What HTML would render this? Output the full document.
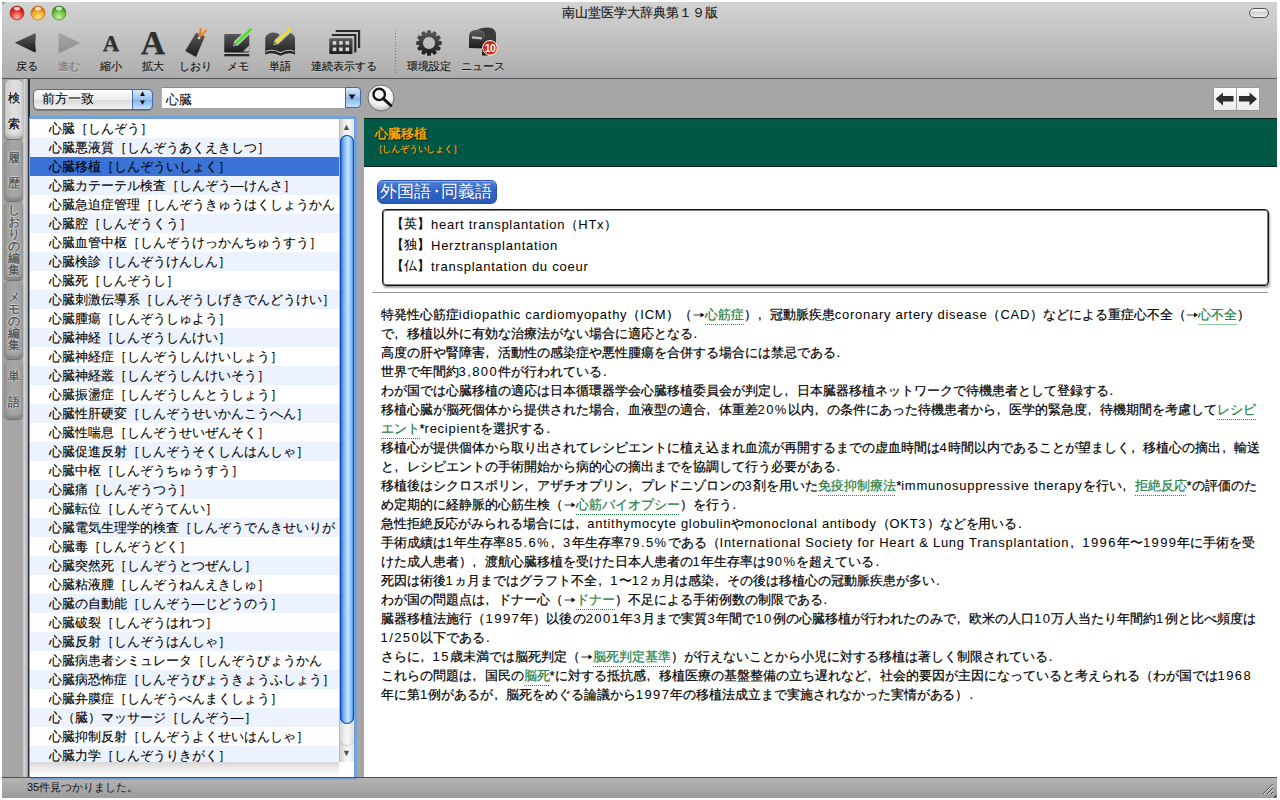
<!DOCTYPE html>
<html><head><meta charset="utf-8"><style>
*{box-sizing:border-box}
html,body{margin:0;padding:0;width:1280px;height:800px;overflow:hidden;background:#fff;font-family:"Liberation Sans",sans-serif;color:#000}
.a{position:absolute}
svg{position:absolute;overflow:visible}
#win{position:absolute;left:2px;top:2px;width:1275px;height:795.5px;background:#a6a6a6;overflow:hidden}
#tb{position:absolute;left:0;top:0;width:1275px;height:76px;background:linear-gradient(#d3d3d3,#cacaca 25%,#adadad)}
#tbline{position:absolute;left:0;top:76px;width:1275px;height:1px;background:#575757}
#title{position:absolute;left:0;top:3.2px;-webkit-text-stroke:0.15px #111;width:1275px;text-align:center;font-size:13px;line-height:15px;color:#1a1a1a}
.tl{position:absolute;top:4px;width:14px;height:14px;border-radius:50%}
.lbl{position:absolute;top:58px;-webkit-text-stroke:0.15px currentColor;font-size:11px;line-height:13px;color:#0e0e0e;text-shadow:0 1px 0 rgba(255,255,255,.35);text-align:center;white-space:nowrap}
#strip{position:absolute;left:0;top:77px;width:28px;height:698px;background:#a6a6a6}
#list{position:absolute;left:28px;top:114px;width:327px;height:661px;background:#fff}
.row{position:absolute;left:2px;width:309px;height:19px;font-size:13px;line-height:19.5px;-webkit-text-stroke:0.1px #000;padding-left:16px;white-space:nowrap;overflow:hidden;color:#000}
.odd{background:#edf3fe}
.sel{background:#3a72d6}
#content{position:absolute;left:362px;top:115px;width:913px;height:660px;background:linear-gradient(#a6a6a6 0 1px,#fff 1px);overflow:hidden}
#hdr{position:absolute;left:0;top:1px;width:913px;height:48.5px;background:#005846;border-top:1px solid #08261c;border-bottom:1px solid #08261c}
.ln{position:absolute;font-size:13px;line-height:19px;white-space:nowrap;transform-origin:0 50%;color:#000;-webkit-text-stroke:0.2px #000}
.lk{color:#22803f;-webkit-text-stroke-color:#22803f;background-image:linear-gradient(90deg,#2a8a4a 50%,transparent 50%);background-size:2px 1px;background-repeat:repeat-x;background-position:0 100%;padding-bottom:3px}
.pc{display:inline-block;width:13px;padding-left:1px;font-size:13px;letter-spacing:0}
.ar{position:static;display:inline-block;vertical-align:-2px}
#status{position:absolute;left:0;top:775px;width:1275px;height:21px;background:linear-gradient(#b4b4b4,#9c9c9c);border-top:1px solid #4e4e4e}
.en{letter-spacing:.75px;-webkit-text-stroke-width:0}
.dg{letter-spacing:1.4px;-webkit-text-stroke-width:0}
.bk{display:inline-block;overflow:hidden;vertical-align:top;height:19px}
.vt{position:absolute;font-size:12px;line-height:13px;width:14px;text-align:center;-webkit-text-stroke:0.3px currentColor}
</style></head><body><div id="win">
<div id="tb"></div><div id="tbline"></div>
<div id="title">南山堂医学大辞典第１９版</div>
<svg style="left:7px;top:3px" width="16" height="16" viewBox="0 0 16 16"><defs><radialGradient id="tl0" cx="50%" cy="80%" r="75%"><stop offset="0" stop-color="#ffb8b4"/><stop offset="0.6" stop-color="#e8342c"/><stop offset="1" stop-color="#9a1410"/></radialGradient></defs><circle cx="8" cy="8" r="7" fill="url(#tl0)" stroke="#9a1410" stroke-opacity=".7" stroke-width=".8"/><ellipse cx="8" cy="3.6" rx="3.2" ry="1.8" fill="#fff" fill-opacity=".75"/></svg>
<svg style="left:28px;top:3px" width="16" height="16" viewBox="0 0 16 16"><defs><radialGradient id="tl1" cx="50%" cy="80%" r="75%"><stop offset="0" stop-color="#ffe58a"/><stop offset="0.6" stop-color="#f2a528"/><stop offset="1" stop-color="#b85a08"/></radialGradient></defs><circle cx="8" cy="8" r="7" fill="url(#tl1)" stroke="#b85a08" stroke-opacity=".7" stroke-width=".8"/><ellipse cx="8" cy="3.6" rx="3.2" ry="1.8" fill="#fff" fill-opacity=".75"/></svg>
<svg style="left:49px;top:3px" width="16" height="16" viewBox="0 0 16 16"><defs><radialGradient id="tl2" cx="50%" cy="80%" r="75%"><stop offset="0" stop-color="#cdf2a0"/><stop offset="0.6" stop-color="#6cc040"/><stop offset="1" stop-color="#2e7a14"/></radialGradient></defs><circle cx="8" cy="8" r="7" fill="url(#tl2)" stroke="#2e7a14" stroke-opacity=".7" stroke-width=".8"/><ellipse cx="8" cy="3.6" rx="3.2" ry="1.8" fill="#fff" fill-opacity=".75"/></svg>
<div class="a" style="left:1247px;top:6px;width:20px;height:10px;border-radius:5px;border:1.5px solid #555;background:linear-gradient(#fafafa,#cfcfcf 50%,#f2f2f2)"></div>
<svg style="left:0;top:0" width="4" height="4"><path d="M0 2.5 L2.5 0" stroke="#444" stroke-width="1"/></svg>
<div class="lbl" style="left:-25.5px;width:100px;color:#0e0e0e">戻る</div>
<div class="lbl" style="left:16.5px;width:100px;color:#7a7a7a">進む</div>
<div class="lbl" style="left:59px;width:100px;color:#0e0e0e">縮小</div>
<div class="lbl" style="left:101px;width:100px;color:#0e0e0e">拡大</div>
<div class="lbl" style="left:143.5px;width:100px;color:#0e0e0e">しおり</div>
<div class="lbl" style="left:186px;width:100px;color:#0e0e0e">メモ</div>
<div class="lbl" style="left:228px;width:100px;color:#0e0e0e">単語</div>
<div class="lbl" style="left:291.5px;width:100px;color:#0e0e0e">連続表示する</div>
<div class="lbl" style="left:376.5px;width:100px;color:#0e0e0e">環境設定</div>
<div class="lbl" style="left:431px;width:100px;color:#0e0e0e">ニュース</div>
<svg style="left:0;top:0" width="1" height="1"><defs>
<linearGradient id="dk" x1="0" y1="0" x2="0" y2="1"><stop offset="0" stop-color="#5a5a5a"/><stop offset="1" stop-color="#1c1c1c"/></linearGradient>
<linearGradient id="lt" x1="0" y1="0" x2="0" y2="1"><stop offset="0" stop-color="#a8a8a8"/><stop offset="1" stop-color="#8c8c8c"/></linearGradient>
</defs></svg>
<svg style="left:11px;top:28.5px" width="25" height="24" viewBox="0 0 25 24"><path d="M1.8 11.8 L21.5 2.6 Q22.8 2 22.8 3.5 Q21.8 12 22.8 20 Q22.8 21.8 21.5 21.2 Z" fill="url(#dk)"/></svg>
<svg style="left:55px;top:29px" width="25" height="24" viewBox="0 0 25 24"><path d="M23.5 12 L2.5 2 Q1.5 1.8 1.5 3 L1.5 21 Q1.5 22.2 2.5 22 Z" fill="url(#lt)"/></svg>
<div class="a" style="left:99px;top:29.5px;width:20px;text-align:center;font-family:'Liberation Serif',serif;font-weight:bold;font-size:23px;line-height:23px;color:#2e2e2e;text-shadow:0 1px 1px rgba(0,0,0,.35)">A</div>
<div class="a" style="left:137px;top:24px;width:28px;text-align:center;font-family:'Liberation Serif',serif;font-weight:bold;font-size:34px;line-height:34px;color:#2e2e2e;text-shadow:0 1px 1px rgba(0,0,0,.35)">A</div>
<svg style="left:181px;top:24px" width="27" height="33" viewBox="0 0 27 33"><path d="M13.1 6.75 L21.9 10.2 L13.1 31.1 L2.2 24.9 Z" fill="url(#dk)"/><path d="M2.6 25.6 L12.8 31.4" stroke="#9a9a9a" stroke-width="1" stroke-dasharray="1.5 1"/><circle cx="16" cy="12" r="1.3" fill="#d8d8d8"/><path d="M15.5 11 L16.8 2 L19 2.3 L18.4 8.2 L22.6 3.2 L24.3 4.6 L17.5 11.5 Z" fill="#f57d12"/></svg>
<svg style="left:220px;top:24px" width="32" height="32" viewBox="0 0 32 32"><rect x="2.25" y="8" width="25" height="18.4" rx="1" fill="url(#dk)"/><rect x="2.25" y="28" width="25" height="2.3" fill="#2a2a2a"/><path d="M21 25.5 L27 19.5 L27.3 25.5 Z" fill="#b8b8b8"/><path d="M12 19.5 L13.1 15.6 L27.1 2.1 Q28.5 0.8 29.9 2.1 Q31.2 3.5 29.9 4.9 L15.9 18.5 Z" fill="#3ee61c" stroke="#c4c4c4" stroke-width="1.6" stroke-linejoin="round"/><path d="M12 19.5 L12.6 17.3 L14.2 18.9 Z" fill="#444"/></svg>
<svg style="left:260px;top:25px" width="36" height="32" viewBox="0 0 36 32"><path d="M3.3 10.5 Q5 6 11 5.6 Q16 5.6 18.5 9 Q21 5.6 26 5.6 Q31.5 6 33 10.5 L33 27.5 Q26 24.5 18.5 28.8 Q11 24.5 3.3 27.5 Z" fill="url(#dk)"/><path d="M3.8 24.6 Q11 21.5 18.5 25.8 Q26 21.5 32.5 24.6" stroke="#c0c0c0" stroke-width="1.1" fill="none"/><path d="M12.3 17.2 L13.48 13.35 L26.83 0.75 Q28.2 -0.5 29.57 0.75 Q30.9 2.2 29.57 3.65 L16.22 16.25 Z" fill="#f4e800" stroke="#c4c4c4" stroke-width="1.6" stroke-linejoin="round"/><path d="M12.3 17.2 L12.9 15 L14.5 16.6 Z" fill="#444"/></svg>
<svg style="left:324px;top:25px" width="38" height="30" viewBox="0 0 38 30"><path d="M9.7 3 H34.2 V21 H32 V5 H9.7 Z" fill="#2a2a2a"/><path d="M5.9 6.9 H30.4 V25.4 H28.2 V9 H5.9 Z" fill="#2a2a2a"/><rect x="3.3" y="11.2" width="23.2" height="15.8" rx="0.8" fill="url(#dk)"/><rect x="6.7" y="14.1" width="3.6" height="3.6" fill="#d4d4d4"/><rect x="6.7" y="20.5" width="3.6" height="3.6" fill="#d4d4d4"/><rect x="13.1" y="14.1" width="3.6" height="3.6" fill="#d4d4d4"/><rect x="13.1" y="20.5" width="3.6" height="3.6" fill="#d4d4d4"/><rect x="19.5" y="14.1" width="3.6" height="3.6" fill="#d4d4d4"/><rect x="19.5" y="20.5" width="3.6" height="3.6" fill="#d4d4d4"/></svg>
<div class="a" style="left:393px;top:28px;width:1px;height:44px;background-image:linear-gradient(#777 50%,transparent 50%);background-size:1px 3px"></div>
<svg style="left:413.1px;top:27.1px" width="28" height="28" viewBox="0 0 28 28"><path d="M12.33,1.21 L15.67,1.21 L16.23,4.05 L17.05,4.27 L18.95,2.09 L21.84,3.76 L20.90,6.49 L21.51,7.10 L24.24,6.16 L25.91,9.05 L23.73,10.95 L23.95,11.77 L26.79,12.33 L26.79,15.67 L23.95,16.23 L23.73,17.05 L25.91,18.95 L24.24,21.84 L21.51,20.90 L20.90,21.51 L21.84,24.24 L18.95,25.91 L17.05,23.73 L16.23,23.95 L15.67,26.79 L12.33,26.79 L11.77,23.95 L10.95,23.73 L9.05,25.91 L6.16,24.24 L7.10,21.51 L6.49,20.90 L3.76,21.84 L2.09,18.95 L4.27,17.05 L4.05,16.23 L1.21,15.67 L1.21,12.33 L4.05,11.77 L4.27,10.95 L2.09,9.05 L3.76,6.16 L6.49,7.10 L7.10,6.49 L6.16,3.76 L9.05,2.09 L10.95,4.27 L11.77,4.05 Z M14 8 A6 6 0 1 0 14.01 8 Z" fill="url(#dk)" fill-rule="evenodd"/></svg>
<svg style="left:464px;top:23px" width="34" height="34" viewBox="0 0 34 34"><path d="M16 23.6 L16 30.4 L22 30.4 L22 23 Z" fill="#1e1e1e"/><path d="M10 5.5 Q14 2.5 22 2.5 Q30 2.5 30 10 L30 21 L19 24 Z" fill="#3a3a3a"/><path d="M3 23 L3 12 Q3 5 10 5 Q19 5 19 12 L19 23.6 Z" fill="url(#dk)"/><path d="M18.5 12 Q18.5 6 12 5.2" stroke="#777" stroke-width=".8" fill="none"/><path d="M6 11.2 L16 12.2 L16 14.5 L6 13.5 Z" fill="#c4c4c4"/><circle cx="24" cy="22.8" r="7.3" fill="#d42414" stroke="#f4f4f4" stroke-width="1"/><text x="24" y="26.6" font-family="Liberation Sans" font-weight="bold" font-size="10.5" fill="#fff" text-anchor="middle" letter-spacing="-0.5">10</text></svg>
<div class="a" style="left:31px;top:87px;width:120px;height:21px;border-radius:5px;border:1px solid #6a6a6a;background:linear-gradient(#ffffff,#ececec 50%,#d8d8d8 51%,#f4f4f4);box-shadow:0 1px 1px rgba(0,0,0,.25)"></div>
<div class="a" style="left:130px;top:87px;width:21px;height:21px;border-radius:0 5px 5px 0;border:1px solid #4668a8;background:linear-gradient(#dbe9fb,#9cc2f0 50%,#7eb0ec 51%,#c4e2fd)"></div>
<div class="a" style="left:134px;top:88px;width:13px;font-size:8px;line-height:8.5px;text-align:center;color:#111">▲<br>▼</div>
<div class="a" style="left:39.5px;top:87.5px;font-size:13px;line-height:17px">前方一致</div>
<div class="a" style="left:159px;top:85px;width:184px;height:20.5px;background:#fff;border-top:1px solid #8a8a8a;border-left:1px solid #b0b0b0"></div>
<div class="a" style="left:163.5px;top:88.5px;font-size:13px;line-height:17px">心臓</div>
<div class="a" style="left:343px;top:85px;width:16px;height:21px;border-radius:0 4px 4px 0;border:1px solid #4668a8;background:linear-gradient(#dbe9fb,#9cc2f0 50%,#7eb0ec 51%,#c4e2fd)"></div>
<svg style="left:346px;top:92px" width="8" height="6" viewBox="0 0 8 6"><path d="M0.5 0.5 H7.5 L4 5.5 Z" fill="#111"/></svg>
<svg style="left:365px;top:82px" width="28" height="28" viewBox="0 0 28 28"><defs><radialGradient id="mg" cx="50%" cy="30%" r="70%"><stop offset="0" stop-color="#fff"/><stop offset="0.7" stop-color="#f0f0f0"/><stop offset="1" stop-color="#b8b8b8"/></radialGradient></defs><circle cx="14" cy="14" r="13" fill="url(#mg)" stroke="#6a6a6a" stroke-width="1"/><circle cx="12.2" cy="10.4" r="5.7" fill="none" stroke="#1a1414" stroke-width="2.4"/><path d="M16.3 14.6 L24 21.6" stroke="#1a1414" stroke-width="2.8" stroke-linecap="round"/></svg>
<div class="a" style="left:1211px;top:85px;width:24px;height:24px;background:linear-gradient(#fdfdfd,#ececec);border:1px solid #9a9a9a"></div>
<div class="a" style="left:1234px;top:85px;width:24px;height:24px;background:linear-gradient(#fdfdfd,#ececec);border:1px solid #9a9a9a"></div>
<svg style="left:1213px;top:89.5px" width="20" height="14" viewBox="0 0 20 14"><path d="M0.5 7 L8 0.5 L8 4 L18.5 4 L18.5 9.5 L8 9.5 L8 13.5 Z" fill="#2e2e2e"/></svg>
<svg style="left:1236px;top:89.5px" width="20" height="14" viewBox="0 0 20 14"><path d="M19 7 L11.5 0.5 L11.5 4 L1 4 L1 9.5 L11.5 9.5 L11.5 13.5 Z" fill="#2e2e2e"/></svg>
<div id="strip"></div>
<div class="a" style="left:20px;top:77px;width:6px;height:698px;background:linear-gradient(90deg,#a0a0a0,#d6d6d6 35%,#c0c0c0 70%,#9a9a9a)"></div>
<div class="a" style="left:26px;top:77px;width:1.5px;height:698px;background:#26303a"></div>
<div class="a" style="left:1.5px;top:78px;width:19px;height:58.5px;border-radius:5px;background:linear-gradient(90deg,#cacaca,#e0e0e0 50%,#d6d6d6);box-shadow:inset 1px 0 0 #8e8e8e,inset 0 -3px 3px rgba(0,0,0,.18),0 1px 1px rgba(0,0,0,.35)"></div>
<div class="vt" style="left:4.5px;top:89.5px;font-size:12px;color:#111;text-shadow:1px 0 1px #fff,-1px 0 1px #fff,0 1px 1px #fff,0 -1px 1px #fff">検</div>
<div class="vt" style="left:4.5px;top:115.5px;font-size:12px;color:#111;text-shadow:1px 0 1px #fff,-1px 0 1px #fff,0 1px 1px #fff,0 -1px 1px #fff">索</div>
<div class="a" style="left:1.5px;top:138px;width:19px;height:61px;border-radius:5px;background:linear-gradient(90deg,#9a9a9a,#a6a6a6 50%,#9e9e9e);box-shadow:inset 1px 0 0 #8e8e8e,inset 0 -3px 3px rgba(0,0,0,.18),0 1px 1px rgba(0,0,0,.35)"></div>
<div class="vt" style="left:4.5px;top:149.5px;font-size:12px;color:#4c4c4c;text-shadow:1px 0 1px #dcdcdc,-1px 0 1px #dcdcdc,0 1px 1px #dcdcdc,0 -1px 1px #dcdcdc">履</div>
<div class="vt" style="left:4.5px;top:175.0px;font-size:12px;color:#4c4c4c;text-shadow:1px 0 1px #dcdcdc,-1px 0 1px #dcdcdc,0 1px 1px #dcdcdc,0 -1px 1px #dcdcdc">歴</div>
<div class="a" style="left:1.5px;top:199.5px;width:19px;height:78.19999999999999px;border-radius:5px;background:linear-gradient(90deg,#9a9a9a,#a6a6a6 50%,#9e9e9e);box-shadow:inset 1px 0 0 #8e8e8e,inset 0 -3px 3px rgba(0,0,0,.18),0 1px 1px rgba(0,0,0,.35)"></div>
<div class="vt" style="left:4.5px;top:201.5px;font-size:11.5px;color:#4c4c4c;text-shadow:1px 0 1px #dcdcdc,-1px 0 1px #dcdcdc,0 1px 1px #dcdcdc,0 -1px 1px #dcdcdc">し</div>
<div class="vt" style="left:4.5px;top:213.5px;font-size:11.5px;color:#4c4c4c;text-shadow:1px 0 1px #dcdcdc,-1px 0 1px #dcdcdc,0 1px 1px #dcdcdc,0 -1px 1px #dcdcdc">お</div>
<div class="vt" style="left:4.5px;top:225.5px;font-size:11.5px;color:#4c4c4c;text-shadow:1px 0 1px #dcdcdc,-1px 0 1px #dcdcdc,0 1px 1px #dcdcdc,0 -1px 1px #dcdcdc">り</div>
<div class="vt" style="left:4.5px;top:237.5px;font-size:11.5px;color:#4c4c4c;text-shadow:1px 0 1px #dcdcdc,-1px 0 1px #dcdcdc,0 1px 1px #dcdcdc,0 -1px 1px #dcdcdc">の</div>
<div class="vt" style="left:4.5px;top:249.5px;font-size:11.5px;color:#4c4c4c;text-shadow:1px 0 1px #dcdcdc,-1px 0 1px #dcdcdc,0 1px 1px #dcdcdc,0 -1px 1px #dcdcdc">編</div>
<div class="vt" style="left:4.5px;top:261.5px;font-size:11.5px;color:#4c4c4c;text-shadow:1px 0 1px #dcdcdc,-1px 0 1px #dcdcdc,0 1px 1px #dcdcdc,0 -1px 1px #dcdcdc">集</div>
<div class="a" style="left:1.5px;top:279px;width:19px;height:78px;border-radius:5px;background:linear-gradient(90deg,#9a9a9a,#a6a6a6 50%,#9e9e9e);box-shadow:inset 1px 0 0 #8e8e8e,inset 0 -3px 3px rgba(0,0,0,.18),0 1px 1px rgba(0,0,0,.35)"></div>
<div class="vt" style="left:4.5px;top:288.5px;font-size:11.5px;color:#4c4c4c;text-shadow:1px 0 1px #dcdcdc,-1px 0 1px #dcdcdc,0 1px 1px #dcdcdc,0 -1px 1px #dcdcdc">メ</div>
<div class="vt" style="left:4.5px;top:300.5px;font-size:11.5px;color:#4c4c4c;text-shadow:1px 0 1px #dcdcdc,-1px 0 1px #dcdcdc,0 1px 1px #dcdcdc,0 -1px 1px #dcdcdc">モ</div>
<div class="vt" style="left:4.5px;top:312.5px;font-size:11.5px;color:#4c4c4c;text-shadow:1px 0 1px #dcdcdc,-1px 0 1px #dcdcdc,0 1px 1px #dcdcdc,0 -1px 1px #dcdcdc">の</div>
<div class="vt" style="left:4.5px;top:324.5px;font-size:11.5px;color:#4c4c4c;text-shadow:1px 0 1px #dcdcdc,-1px 0 1px #dcdcdc,0 1px 1px #dcdcdc,0 -1px 1px #dcdcdc">編</div>
<div class="vt" style="left:4.5px;top:336.5px;font-size:11.5px;color:#4c4c4c;text-shadow:1px 0 1px #dcdcdc,-1px 0 1px #dcdcdc,0 1px 1px #dcdcdc,0 -1px 1px #dcdcdc">集</div>
<div class="a" style="left:1.5px;top:358.8px;width:19px;height:58.5px;border-radius:5px;background:linear-gradient(90deg,#9a9a9a,#a6a6a6 50%,#9e9e9e);box-shadow:inset 1px 0 0 #8e8e8e,inset 0 -3px 3px rgba(0,0,0,.18),0 1px 1px rgba(0,0,0,.35)"></div>
<div class="vt" style="left:4.5px;top:368.0px;font-size:12px;color:#4c4c4c;text-shadow:1px 0 1px #dcdcdc,-1px 0 1px #dcdcdc,0 1px 1px #dcdcdc,0 -1px 1px #dcdcdc">単</div>
<div class="vt" style="left:4.5px;top:393.9px;font-size:12px;color:#4c4c4c;text-shadow:1px 0 1px #dcdcdc,-1px 0 1px #dcdcdc,0 1px 1px #dcdcdc,0 -1px 1px #dcdcdc">語</div>
<div class="a" style="left:27px;top:114px;width:328px;height:665px;background:#74a2d8;border-radius:3px"></div>
<div id="list" style="left:28px;top:117px;width:324px;height:658px;background:#fff"></div>
<div class="row" style="left:28px;top:117px;height:19px;width:309.5px;padding-left:18.5px">心臓［しんぞう］</div>
<div class="row odd" style="left:28px;top:136px;height:19px;width:309.5px;padding-left:18.5px">心臓悪液質［しんぞうあくえきしつ］</div>
<div class="row sel" style="left:28px;top:155px;height:19px;width:309.5px;padding-left:18.5px">心臓移植［しんぞういしょく］</div>
<div class="row odd" style="left:28px;top:174px;height:19px;width:309.5px;padding-left:18.5px">心臓カテーテル検査［しんぞう―けんさ］</div>
<div class="row" style="left:28px;top:193px;height:19px;width:309.5px;padding-left:18.5px">心臓急迫症管理［しんぞうきゅうはくしょうかん</div>
<div class="row odd" style="left:28px;top:212px;height:19px;width:309.5px;padding-left:18.5px">心臓腔［しんぞうくう］</div>
<div class="row" style="left:28px;top:231px;height:19px;width:309.5px;padding-left:18.5px">心臓血管中枢［しんぞうけっかんちゅうすう］</div>
<div class="row odd" style="left:28px;top:250px;height:19px;width:309.5px;padding-left:18.5px">心臓検診［しんぞうけんしん］</div>
<div class="row" style="left:28px;top:269px;height:19px;width:309.5px;padding-left:18.5px">心臓死［しんぞうし］</div>
<div class="row odd" style="left:28px;top:288px;height:19px;width:309.5px;padding-left:18.5px">心臓刺激伝導系［しんぞうしげきでんどうけい］</div>
<div class="row" style="left:28px;top:307px;height:19px;width:309.5px;padding-left:18.5px">心臓腫瘍［しんぞうしゅよう］</div>
<div class="row odd" style="left:28px;top:326px;height:19px;width:309.5px;padding-left:18.5px">心臓神経［しんぞうしんけい］</div>
<div class="row" style="left:28px;top:345px;height:19px;width:309.5px;padding-left:18.5px">心臓神経症［しんぞうしんけいしょう］</div>
<div class="row odd" style="left:28px;top:364px;height:19px;width:309.5px;padding-left:18.5px">心臓神経叢［しんぞうしんけいそう］</div>
<div class="row" style="left:28px;top:383px;height:19px;width:309.5px;padding-left:18.5px">心臓振盪症［しんぞうしんとうしょう］</div>
<div class="row odd" style="left:28px;top:402px;height:19px;width:309.5px;padding-left:18.5px">心臓性肝硬変［しんぞうせいかんこうへん］</div>
<div class="row" style="left:28px;top:421px;height:19px;width:309.5px;padding-left:18.5px">心臓性喘息［しんぞうせいぜんそく］</div>
<div class="row odd" style="left:28px;top:440px;height:19px;width:309.5px;padding-left:18.5px">心臓促進反射［しんぞうそくしんはんしゃ］</div>
<div class="row" style="left:28px;top:459px;height:19px;width:309.5px;padding-left:18.5px">心臓中枢［しんぞうちゅうすう］</div>
<div class="row odd" style="left:28px;top:478px;height:19px;width:309.5px;padding-left:18.5px">心臓痛［しんぞうつう］</div>
<div class="row" style="left:28px;top:497px;height:19px;width:309.5px;padding-left:18.5px">心臓転位［しんぞうてんい］</div>
<div class="row odd" style="left:28px;top:516px;height:19px;width:309.5px;padding-left:18.5px">心臓電気生理学的検査［しんぞうでんきせいりが</div>
<div class="row" style="left:28px;top:535px;height:19px;width:309.5px;padding-left:18.5px">心臓毒［しんぞうどく］</div>
<div class="row odd" style="left:28px;top:554px;height:19px;width:309.5px;padding-left:18.5px">心臓突然死［しんぞうとつぜんし］</div>
<div class="row" style="left:28px;top:573px;height:19px;width:309.5px;padding-left:18.5px">心臓粘液腫［しんぞうねんえきしゅ］</div>
<div class="row odd" style="left:28px;top:592px;height:19px;width:309.5px;padding-left:18.5px">心臓の自動能［しんぞう―じどうのう］</div>
<div class="row" style="left:28px;top:611px;height:19px;width:309.5px;padding-left:18.5px">心臓破裂［しんぞうはれつ］</div>
<div class="row odd" style="left:28px;top:630px;height:19px;width:309.5px;padding-left:18.5px">心臓反射［しんぞうはんしゃ］</div>
<div class="row" style="left:28px;top:649px;height:19px;width:309.5px;padding-left:18.5px">心臓病患者シミュレータ［しんぞうびょうかん</div>
<div class="row odd" style="left:28px;top:668px;height:19px;width:309.5px;padding-left:18.5px">心臓病恐怖症［しんぞうびょうきょうふしょう］</div>
<div class="row" style="left:28px;top:687px;height:19px;width:309.5px;padding-left:18.5px">心臓弁膜症［しんぞうべんまくしょう］</div>
<div class="row odd" style="left:28px;top:706px;height:19px;width:309.5px;padding-left:18.5px">心（臓）マッサージ［しんぞう―］</div>
<div class="row" style="left:28px;top:725px;height:19px;width:309.5px;padding-left:18.5px">心臓抑制反射［しんぞうよくせいはんしゃ］</div>
<div class="row odd" style="left:28px;top:744px;height:16px;width:309.5px;padding-left:18.5px">心臓力学［しんぞうりきがく］</div>
<div class="a" style="left:28px;top:760px;width:309px;height:15px;background:linear-gradient(#d6d6d6,#efefef 50%,#fff)"></div>
<div class="a" style="left:337px;top:117px;width:15px;height:643px;background:linear-gradient(90deg,#cfcfcf,#ececec 30%,#fafafa 60%,#e2e2e2);border-left:1px solid #bdbdbd"></div>
<div class="a" style="left:337px;top:120px;width:15px;font-size:9px;line-height:11px;text-align:center;color:#505050">▲</div>
<div class="a" style="left:337px;top:745.5px;width:15px;font-size:9px;line-height:11px;text-align:center;color:#505050">▼</div>
<div class="a" style="left:338px;top:722px;width:14px;height:21px;border-radius:0 0 7px 7px;background:linear-gradient(90deg,#d8d8d8,#f6f6f6 50%,#e0e0e0);box-shadow:0 1px 1px rgba(0,0,0,.2)"></div>
<div class="a" style="left:338px;top:133px;width:13.5px;height:589px;border-radius:7px;background:linear-gradient(90deg,#0f45c0,#5a9ae8 18%,#a0cdf8 40%,#c2e4ff 60%,#78b6f4 85%,#2a62d0);box-shadow:inset 0 0 0 1px #1848b8"></div>
<div class="a" style="left:355px;top:115px;width:7px;height:660px;background:#a6a6a6"></div>
<div id="content">
<div id="hdr"></div>
<div class="a" style="left:11px;top:9px;font-size:13px;line-height:15px;font-weight:bold;color:#f5a000;text-shadow:1px 1px 1px #002a1e">心臓移植</div>
<div class="a" style="left:9.5px;top:26px;font-size:9px;line-height:12px;letter-spacing:-0.2px;color:#f8a400;-webkit-text-stroke:0.25px #f8a400;text-shadow:1px 1px 1px #002a1e;white-space:nowrap">［しんぞういしょく］</div>
<div class="a" style="left:13px;top:63px;width:120px;height:24px;border-radius:6px;background:linear-gradient(#4f82dc,#2f62c4 45%,#2a5cbc);border:1px solid #2a52a8;box-shadow:inset 0 1px 0 #8ab0f0"></div>
<div class="a" style="left:16px;top:65px;font-size:17px;line-height:19px;color:#fff;white-space:nowrap;text-shadow:0 0 1px rgba(0,0,80,.3)">外国語<span style="display:inline-block;width:10px;overflow:hidden;vertical-align:top;height:19px"><span style="position:relative;left:-3.5px">・</span></span>同義語</div>
<div class="a" style="left:18px;top:92px;width:887px;height:77px;border:1px solid #111;border-radius:4px;box-shadow:inset 0 0 0 1px rgba(0,0,0,.5),1px 2px 2px rgba(0,0,0,.35)"></div>
<div class="ln" style="left:27px;top:96.5px;-webkit-text-stroke:0.1px #000">【英】<span style="position:relative;left:1px;top:1.5px"><span class="en">heart transplantation</span>（<span class="en">HTx</span>）</span></div>
<div class="ln" style="left:27px;top:117.5px;-webkit-text-stroke:0.1px #000">【独】<span style="position:relative;left:1px;top:1.5px"><span class="en">Herztransplantation</span></span></div>
<div class="ln" style="left:27px;top:138.5px;-webkit-text-stroke:0.1px #000">【仏】<span style="position:relative;left:1px;top:1.5px"><span class="en">transplantation du coeur</span></span></div>
<div class="ln" id="L0" style="left:16.5px;top:187.5px;transform:scaleX(0.997)">特発性心筋症<span class="en">idiopathic cardiomyopathy</span>（<span class="en">ICM</span>）（<svg class="ar" width="13" height="13" viewBox="0 0 13 13"><path d="M1.5 7 H10" stroke="#333" stroke-width="1"/><path d="M8.5 4.5 L12.5 7 L8.5 9.5 Z" fill="#111"/></svg><span class="lk">心筋症</span>）<span class="pc">,</span>冠動脈疾患<span class="en">coronary artery disease</span>（<span class="en">CAD</span>）などによる重症心不全（<svg class="ar" width="13" height="13" viewBox="0 0 13 13"><path d="M1.5 7 H10" stroke="#333" stroke-width="1"/><path d="M8.5 4.5 L12.5 7 L8.5 9.5 Z" fill="#111"/></svg><span class="lk">心不全</span>）</div>
<div class="ln" id="L1" style="left:16.5px;top:206.5px">で<span class="pc">,</span>移植以外に有効な治療法がない場合に適応となる<span class="pc">.</span></div>
<div class="ln" id="L2" style="left:16.5px;top:225.5px">高度の肝や腎障害<span class="pc">,</span>活動性の感染症や悪性腫瘍を合併する場合には禁忌である<span class="pc">.</span></div>
<div class="ln" id="L3" style="left:16.5px;top:244.5px">世界で年間約<span class="dg">3,800</span>件が行われている<span class="pc">.</span></div>
<div class="ln" id="L4" style="left:16.5px;top:263.5px">わが国では心臓移植の適応は日本循環器学会心臓移植委員会が判定し<span class="pc">,</span>日本臓器移植ネットワークで待機患者として登録する<span class="pc">.</span></div>
<div class="ln" id="L5" style="left:16.5px;top:282.5px">移植心臓が脳死個体から提供された場合<span class="pc">,</span>血液型の適合<span class="pc">,</span>体重差<span class="dg">20%</span>以内<span class="pc">,</span>の条件にあった待機患者から<span class="pc">,</span>医学的緊急度<span class="pc">,</span>待機期間を考慮して<span class="lk">レシピ</span></div>
<div class="ln" id="L6" style="left:16.5px;top:301.5px"><span class="lk">エント</span>*<span class="en">recipient</span>を選択する<span class="pc">.</span></div>
<div class="ln" id="L7" style="left:16.5px;top:320.5px">移植心が提供個体から取り出されてレシピエントに植え込まれ血流が再開するまでの虚血時間は<span class="dg">4</span>時間以内であることが望ましく<span class="pc">,</span>移植心の摘出<span class="pc">,</span>輸送</div>
<div class="ln" id="L8" style="left:16.5px;top:339.5px">と<span class="pc">,</span>レシピエントの手術開始から病的心の摘出までを協調して行う必要がある<span class="pc">.</span></div>
<div class="ln" id="L9" style="left:16.5px;top:358.5px">移植後はシクロスポリン<span class="pc">,</span>アザチオプリン<span class="pc">,</span>プレドニゾロンの<span class="dg">3</span>剤を用いた<span class="lk">免疫抑制療法</span>*<span class="en">immunosuppressive therapy</span>を行い<span class="pc">,</span><span class="lk">拒絶反応</span>*の評価のた</div>
<div class="ln" id="L10" style="left:16.5px;top:377.5px">め定期的に経静脈的心筋生検（<svg class="ar" width="13" height="13" viewBox="0 0 13 13"><path d="M1.5 7 H10" stroke="#333" stroke-width="1"/><path d="M8.5 4.5 L12.5 7 L8.5 9.5 Z" fill="#111"/></svg><span class="lk">心筋バイオプシー</span>）を行う<span class="pc">.</span></div>
<div class="ln" id="L11" style="left:16.5px;top:396.5px;transform:scaleX(0.992)">急性拒絶反応がみられる場合には<span class="pc">,</span><span class="en">antithymocyte globulin</span>や<span class="en">monoclonal antibody</span>（<span class="en">OKT</span><span class="dg">3</span>）などを用いる<span class="pc">.</span></div>
<div class="ln" id="L12" style="left:16.5px;top:415.5px">手術成績は<span class="dg">1</span>年生存率<span class="dg">85.6%</span><span class="pc">,</span><span class="dg">3</span>年生存率<span class="dg">79.5%</span>である（<span class="en">International Society for Heart </span><span class="en">&amp;</span><span class="en"> Lung Transplantation</span><span class="pc">,</span><span class="dg">1996</span>年〜<span class="dg">1999</span>年に手術を受</div>
<div class="ln" id="L13" style="left:16.5px;top:434.5px">けた成人患者）<span class="pc">,</span>渡航心臓移植を受けた日本人患者の<span class="dg">1</span>年生存率は<span class="dg">90%</span>を超えている<span class="pc">.</span></div>
<div class="ln" id="L14" style="left:16.5px;top:453.5px">死因は術後<span class="dg">1</span>ヵ月まではグラフト不全<span class="pc">,</span><span class="dg">1</span>〜<span class="dg">12</span>ヵ月は感染<span class="pc">,</span>その後は移植心の冠動脈疾患が多い<span class="pc">.</span></div>
<div class="ln" id="L15" style="left:16.5px;top:472.5px">わが国の問題点は<span class="pc">,</span>ドナー心（<svg class="ar" width="13" height="13" viewBox="0 0 13 13"><path d="M1.5 7 H10" stroke="#333" stroke-width="1"/><path d="M8.5 4.5 L12.5 7 L8.5 9.5 Z" fill="#111"/></svg><span class="lk">ドナー</span>）不足による手術例数の制限である<span class="pc">.</span></div>
<div class="ln" id="L16" style="left:16.5px;top:491.5px;transform:scaleX(1.0054)">臓器移植法施行（<span class="dg">1997</span>年）以後の<span class="dg">2001</span>年<span class="dg">3</span>月まで実質<span class="dg">3</span>年間で<span class="dg">10</span>例の心臓移植が行われたのみで<span class="pc">,</span>欧米の人口<span class="dg">10</span>万人当たり年間約<span class="dg">1</span>例と比べ頻度は</div>
<div class="ln" id="L17" style="left:16.5px;top:510.5px"><span class="dg">1/250</span>以下である<span class="pc">.</span></div>
<div class="ln" id="L18" style="left:16.5px;top:529.5px">さらに<span class="pc">,</span><span class="dg">15</span>歳未満では脳死判定（<svg class="ar" width="13" height="13" viewBox="0 0 13 13"><path d="M1.5 7 H10" stroke="#333" stroke-width="1"/><path d="M8.5 4.5 L12.5 7 L8.5 9.5 Z" fill="#111"/></svg><span class="lk">脳死判定基準</span>）が行えないことから小児に対する移植は著しく制限されている<span class="pc">.</span></div>
<div class="ln" id="L19" style="left:16.5px;top:548.5px">これらの問題は<span class="pc">,</span>国民の<span class="lk">脳死</span>*に対する抵抗感<span class="pc">,</span>移植医療の基盤整備の立ち遅れなど<span class="pc">,</span>社会的要因が主因になっていると考えられる（わが国では<span class="dg">1968</span></div>
<div class="ln" id="L20" style="left:16.5px;top:567.5px;transform:scaleX(0.997)">年に第<span class="dg">1</span>例があるが<span class="pc">,</span>脳死をめぐる論議から<span class="dg">1997</span>年の移植法成立まで実施されなかった実情がある）<span class="pc">.</span></div>
<div class="a" style="left:8px;top:175px;width:896px;height:1px;background:#9a9a9a"></div>
</div>
<div id="status"></div>
<div class="a" style="left:28px;top:776px;width:327px;height:2px;background:linear-gradient(rgba(90,140,205,.85),rgba(120,160,210,.3))"></div>
<div class="a" style="left:25px;top:779px;font-size:11px;line-height:13px;color:#111">35件見つかりました。</div>
<svg style="left:1259px;top:780px" width="16" height="16" viewBox="0 0 16 16"><path d="M12 3 L3 12 M12 7 L7 12 M12 11 L11 12" stroke="#e8e8e8" stroke-width="1"/><path d="M12 2 L2 12 M12 6 L6 12 M12 10 L10 12" stroke="#4a4a4a" stroke-width="1"/><path d="M13.5 15.5 L15.5 13.5" stroke="#333" stroke-width="1.2"/></svg>
</div></body></html>
